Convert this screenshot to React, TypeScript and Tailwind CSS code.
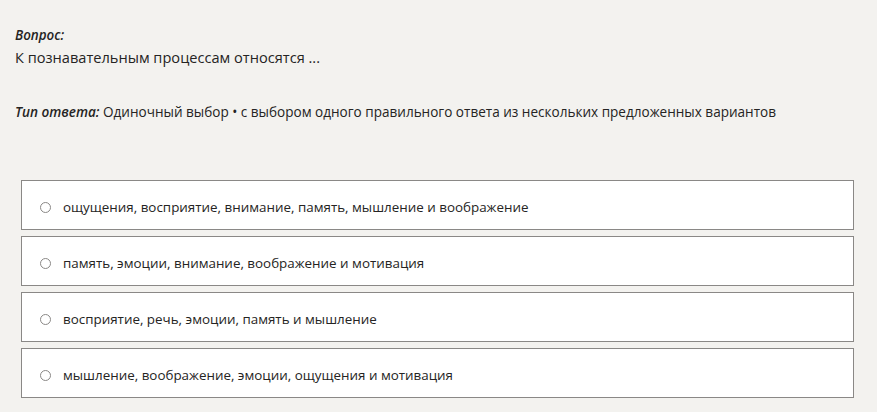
const OPTIONS = [
  "ощущения, восприятие, внимание, память, мышление и воображение",
  "память, эмоции, внимание, воображение и мотивация",
  "восприятие, речь, эмоции, память и мышление",
  "мышление, воображение, эмоции, ощущения и мотивация",
];

const App = () => {
  return (
    <div
      className="w-[877px] h-[412px] bg-[#f3f2ef] text-[#252423] overflow-hidden"
      style={{ fontFamily: '"Open Sans", "Noto Sans", sans-serif' }}
    >
      <div className="pl-[15px] pt-[26px]">
        <div className="text-[13.4px] leading-[18px] font-semibold italic">Вопрос:</div>
        <div className="text-[14.6px] leading-[20px] mt-[3px]">
          К познавательным процессам относятся ...
        </div>
        <div className="text-[13.55px] leading-[18px] mt-[36px]">
          <span className="font-semibold italic">Тип ответа:</span> Одиночный выбор • с
          выбором одного правильного ответа из нескольких предложенных вариантов
        </div>
      </div>
      <div className="flex flex-col gap-[6px] pl-[21px] pr-[23px] mt-[59px]">
        {OPTIONS.map((o) => (
          <label
            key={o}
            className="flex items-center h-[50px] bg-white border border-[#8a8886] pl-[18px] pt-[4px]"
          >
            <span className="w-[11px] h-[11px] rounded-full border border-[#8a8886] bg-white shrink-0" />
            <span className="ml-[12px] text-[13.4px]">{o}</span>
          </label>
        ))}
      </div>
    </div>
  );
};

export default App;
